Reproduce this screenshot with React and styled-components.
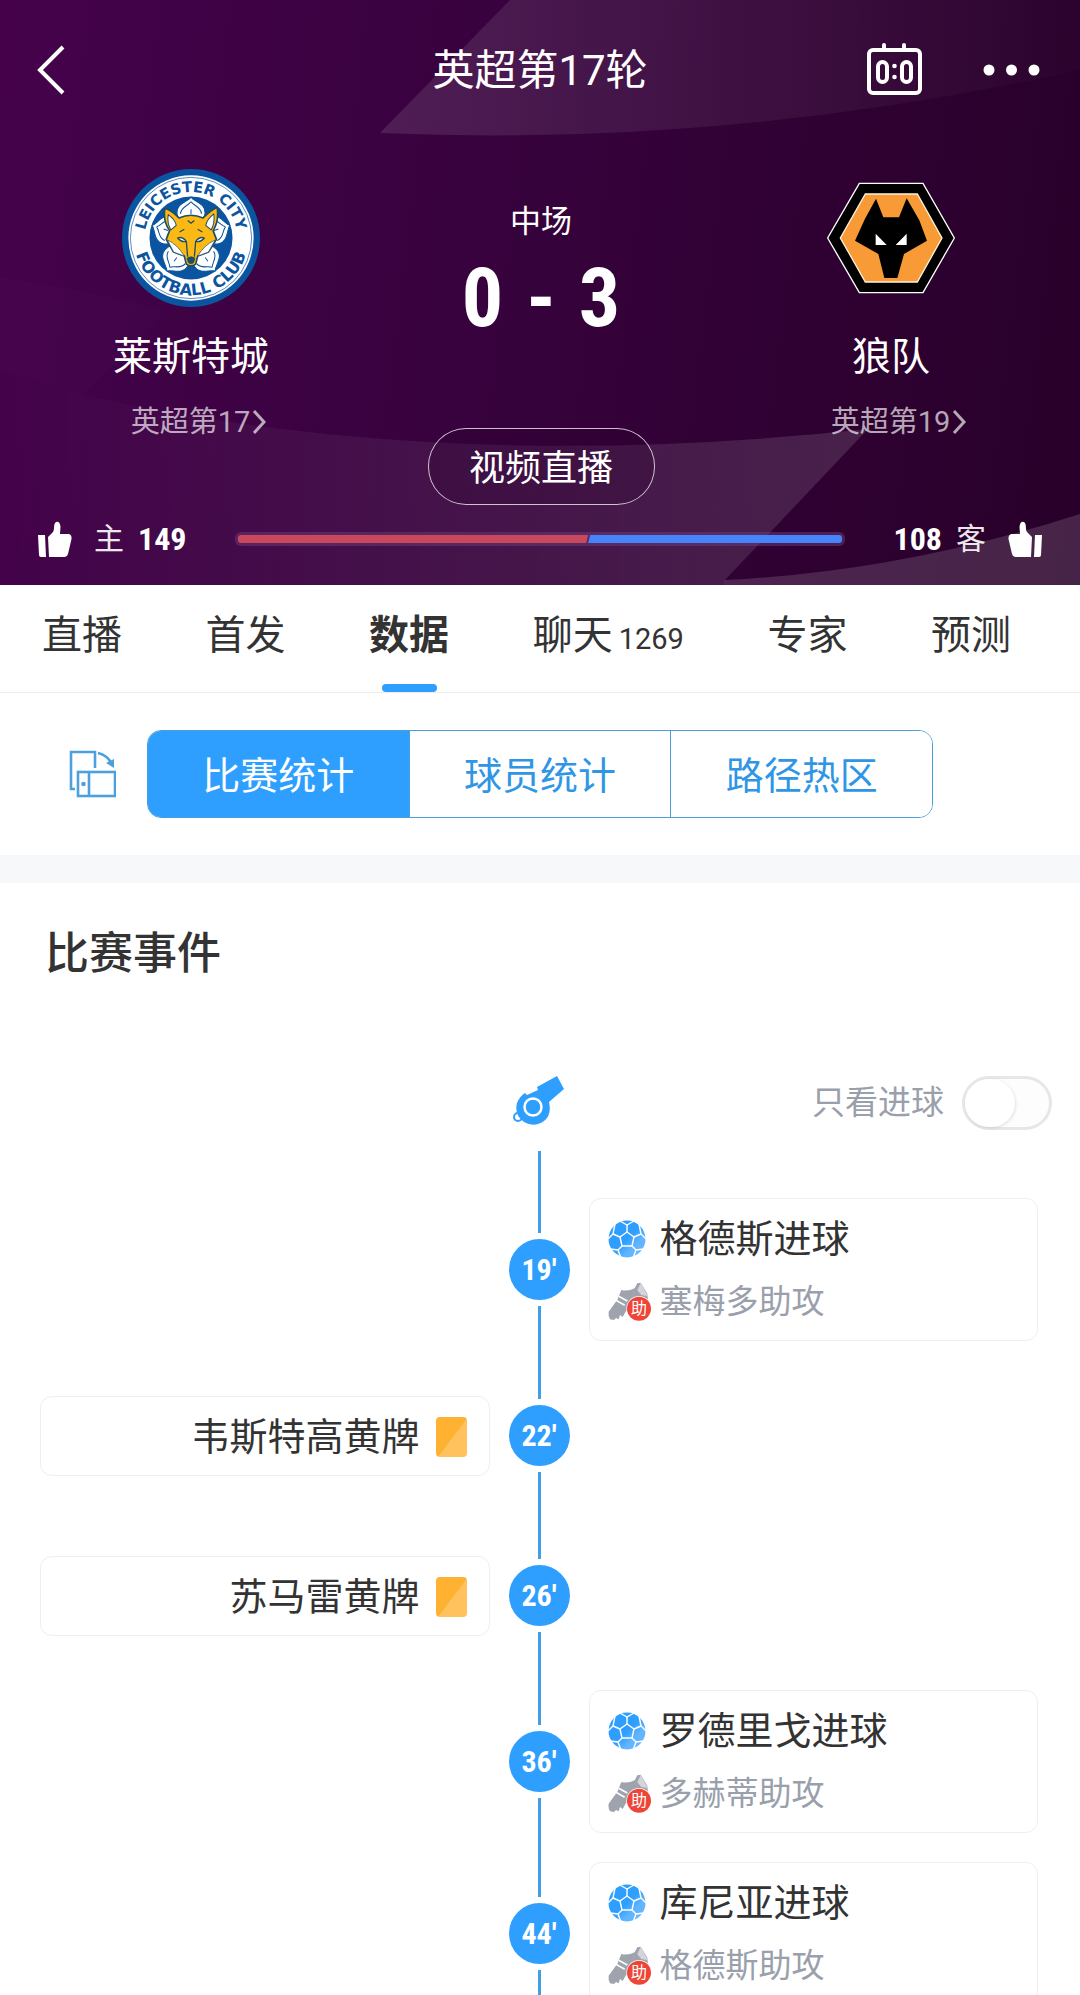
import { useState } from "react";
import styled, { createGlobalStyle } from "styled-components";

const GlobalStyle = createGlobalStyle`
  * {
    box-sizing: border-box;
  }

  body {
    margin: 0;
    background: #fff;
    color: #333;
    font-family: Roboto, "Noto Sans CJK SC", sans-serif;
  }

  button {
    border: 0;
    padding: 0;
    background: none;
    color: inherit;
    font: inherit;
    cursor: pointer;
  }

  a {
    color: inherit;
    text-decoration: none;
  }

  svg {
    display: block;
    flex: none;
  }
`;

const PageStyled = styled.div`
  display: flex;
  flex-direction: column;
  height: 100vh;
  overflow: hidden;
`;

const HeaderStyled = styled.header`
  position: relative;
  flex: none;
  background: linear-gradient(97deg, #45024b 0%, #37023d 45%, #280029 100%);
  color: #fff;
`;

const BackdropStyled = styled.svg`
  position: absolute;
  inset: 0;
  width: 100%;
  height: 100%;
`;

const TopBarStyled = styled.div`
  position: relative;
  display: grid;
  grid-template-columns: 1fr auto 1fr;
  align-items: center;
  height: 140px;
  padding: 0 37px;
`;

const TitleStyled = styled.h1`
  margin: 0;
  padding-top: 2px;
  font-size: 42px;
  font-weight: 400;
  line-height: 60px;
`;

const ActionsStyled = styled.div`
  display: flex;
  justify-content: flex-end;
  align-items: center;
  gap: 61px;
`;

const MatchStyled = styled.div`
  position: relative;
  display: grid;
  grid-template-columns: 1fr 1fr 1fr;
  padding: 29px 14px 0 16px;
`;

const TeamStyled = styled.div`
  display: flex;
  flex-direction: column;
  align-items: center;
`;

const TeamNameStyled = styled.h2`
  margin: 26px 0 21px;
  font-size: 39px;
  font-weight: 400;
  line-height: 48px;
`;

const RankStyled = styled.a`
  display: flex;
  align-items: center;
  gap: 2px;
  padding-left: 16px;
  color: rgba(255, 255, 255, 0.66);
  font-size: 29px;
  line-height: 40px;
`;

const CenterStyled = styled.div`
  display: flex;
  flex-direction: column;
  align-items: center;
  padding-top: 33px;
`;

const StatusStyled = styled.span`
  font-size: 31px;
  line-height: 40px;
`;

const ScoreStyled = styled.div`
  display: flex;
  gap: 23px;
  margin: 16px 0 90px;
  font-family: "Liberation Sans Narrow", "Roboto Condensed", Roboto, sans-serif;
  font-size: 82px;
  font-weight: 700;
  line-height: 80px;
`;

const LiveButtonStyled = styled.button`
  width: 227px;
  height: 77px;
  padding-bottom: 4px;
  border: 1px solid rgba(255, 255, 255, 0.75);
  border-radius: 38px;
  background: rgba(40, 0, 41, 0.2);
  font-size: 36px;
`;

const VotesStyled = styled.div`
  position: relative;
  display: grid;
  grid-template-columns: 197px 1fr 197px;
  align-items: center;
  height: 80px;
  padding: 0 38px 12px;
`;

const VoteStyled = styled.button`
  display: flex;
  flex-direction: ${({ $away }) => ($away ? "row-reverse" : "row")};
  align-items: center;

  svg {
    transform: ${({ $away }) => ($away ? "scaleX(-1)" : "none")};
  }
`;

const VoteSideStyled = styled.span`
  margin: ${({ $away }) => ($away ? "0 22px 0 14px" : "0 14px 0 22px")};
  font-size: 30px;
  line-height: 40px;
  opacity: 0.9;
`;

const VoteCountStyled = styled.span`
  font-family: "Liberation Sans Narrow", "Roboto Condensed", Roboto, sans-serif;
  font-size: 32px;
  font-weight: 700;
  line-height: 40px;
`;

const VoteBarStyled = styled.div`
  display: flex;
  height: 14px;
  padding: 3px;
  border-radius: 6px;
  background: rgba(110, 60, 125, 0.5);
`;

const HomeShareStyled = styled.div`
  border-radius: 3px 0 0 3px;
  background: #c9485b;
  clip-path: polygon(0 0, 100% 0, calc(100% - 2px) 100%, 0 100%);
`;

const AwayShareStyled = styled.div`
  flex: 1;
  border-radius: 0 3px 3px 0;
  background: #4684fb;
  clip-path: polygon(2px 0, 100% 0, 100% 100%, 0 100%);
`;

const TabsStyled = styled.nav`
  display: flex;
  flex: none;
  justify-content: space-between;
  height: 108px;
  padding: 0 69px 0 42px;
  border-bottom: 1px solid #ececec;
`;

const TabStyled = styled.button`
  display: flex;
  flex-direction: column;
  align-items: center;
  font-size: 40px;
  font-weight: ${({ $active }) => ($active ? 700 : 400)};
  line-height: 97px;

  &::after {
    content: "";
    width: 55px;
    height: 8px;
    border-radius: 4px;
    background: ${({ $active }) => ($active ? "#2e9fff" : "transparent")};
  }
`;

const TabLabelStyled = styled.span`
  padding-top: 2px;
`;

const TabCountStyled = styled.span`
  margin-left: 6px;
  font-size: 29px;
`;

const SwitcherStyled = styled.div`
  display: flex;
  flex: none;
  align-items: center;
  gap: 31px;
  padding: 37px 147px 37px 69px;
`;

const SegmentsStyled = styled.div`
  display: flex;
  flex: 1;
  height: 88px;
  overflow: hidden;
  border: 1px solid #4a9fd8;
  border-radius: 14px;
`;

const SegmentStyled = styled.button`
  flex: 1;
  padding-bottom: 4px;
  background: ${({ $active }) => ($active ? "#2e9fff" : "#fff")};
  color: ${({ $active }) => ($active ? "#fff" : "#2f96e6")};
  font-size: 38px;

  & + & {
    border-left: 1px solid #4a9fd8;
  }
`;

const DividerStyled = styled.div`
  flex: none;
  height: 28px;
  background: #f7f8fa;
`;

const SectionTitleStyled = styled.h2`
  flex: none;
  margin: 41px 45px 91px;
  font-size: 44px;
  font-weight: 500;
  line-height: 60px;
`;

const TimelineStyled = styled.ol`
  flex: none;
  margin: 0;
  padding: 0;
  list-style: none;
`;

const KickoffStyled = styled.div`
  display: grid;
  flex: none;
  grid-template-columns: 1fr 61px 1fr;
  align-items: start;
  height: 108px;
  padding: 0 28px 0 26px;
`;

const KickoffMarkStyled = styled.div`
  display: flex;
  flex-direction: column;
  align-items: center;
  gap: 25px;
  height: 100%;
`;

const GoalFilterStyled = styled.label`
  display: flex;
  justify-content: flex-end;
  align-items: center;
  gap: 18px;
  color: #9a9fac;
  font-size: 33px;
  line-height: 55px;
`;

const ToggleStyled = styled.input`
  appearance: none;
  width: 90px;
  height: 54px;
  margin: 0;
  border: 3px solid #e8e6e8;
  border-radius: 27px;
  background: ${({ checked }) => (checked ? "#2e9fff" : "#fdfdfd")};

  &::before {
    content: "";
    display: block;
    width: 50px;
    height: 48px;
    margin-left: ${({ checked }) => (checked ? "34px" : "0")};
    border-radius: 25px;
    background: #fff;
    box-shadow: 1px 1px 3px rgba(60, 40, 60, 0.13);
  }
`;

const EventStyled = styled.li`
  display: grid;
  grid-template-columns: 1fr 61px 1fr;
  gap: 19px;
  min-height: 160px;
  padding: 0 42px 0 40px;
`;

const TrackStyled = styled.div`
  display: flex;
  grid-column: 2;
  grid-row: 1;
  flex-direction: column;
  align-items: center;
  gap: 6px;
`;

const LineStyled = styled.div`
  flex: 1;
  width: 3px;
  background: #409fe6;
`;

const MinuteStyled = styled.time`
  width: 61px;
  height: 61px;
  border-radius: 50%;
  background: #2e9fff;
  color: #fff;
  font-family: "Liberation Sans Narrow", "Roboto Condensed", Roboto, sans-serif;
  font-size: 30px;
  font-weight: 700;
  line-height: 61px;
  text-align: center;
`;

const CardStyled = styled.div`
  grid-column: ${({ $home }) => ($home ? 1 : 3)};
  grid-row: 1;
  align-self: center;
  margin: 15px 0 14px;
  padding: ${({ $home }) => ($home ? "16px 22px 14px" : "16px 18px 14px")};
  border: 1px solid #eee;
  border-radius: 12px;
`;

const CardRowStyled = styled.div`
  display: flex;
  flex-direction: ${({ $home }) => ($home ? "row-reverse" : "row")};
  align-items: center;
  gap: ${({ $home }) => ($home ? "16px" : "8px")};
  font-size: 38px;
  line-height: 48px;
`;

const AssistStyled = styled(CardRowStyled)`
  margin-top: 15px;
  color: #9a9fac;
  font-size: 33px;
`;

const IconSlotStyled = styled.span`
  display: flex;
  width: 44px;
`;

const PenaltyCardStyled = styled.span`
  width: 31px;
  height: 40px;
  border-radius: 4px;
  background: linear-gradient(127deg, #ffb132 52%, #ffc25c 53%);
`;

const tabs = ["直播", "首发", "数据", "聊天", "专家", "预测"];
const segments = ["比赛统计", "球员统计", "路径热区"];
const events = [
  { minute: 19, type: "goal", text: "格德斯进球", assist: "塞梅多助攻" },
  { minute: 22, type: "card", home: true, text: "韦斯特高黄牌" },
  { minute: 26, type: "card", home: true, text: "苏马雷黄牌" },
  { minute: 36, type: "goal", text: "罗德里戈进球", assist: "多赫蒂助攻" },
  { minute: 44, type: "goal", text: "库尼亚进球", assist: "格德斯助攻" },
];

function Backdrop() {
  return (
    <BackdropStyled viewBox="0 0 1080 585" preserveAspectRatio="none" aria-hidden="true">
      <defs>
        <linearGradient id="sweepTop" x1="0" x2="1">
          <stop offset="0" stopColor="#fff" stopOpacity="0.11" />
          <stop offset="1" stopColor="#fff" stopOpacity="0.01" />
        </linearGradient>
        <linearGradient id="sweepBottom" x1="0" x2="1">
          <stop offset="0" stopColor="#fff" stopOpacity="0" />
          <stop offset="1" stopColor="#fff" stopOpacity="0.13" />
        </linearGradient>
      </defs>
      <path d="M510 0L380 133Q730 148 1080 70V0z" fill="url(#sweepTop)" />
      <path d="M0 277Q90 290 165 311L83 395L0 370z" fill="#fff" fillOpacity="0.01" />
      <path d="M83 395Q440 475 868 429L724 581V585H0V370z" fill="url(#sweepBottom)" />
      <path d="M724 580Q900 572 1080 514V585H724z" fill="#fff" fillOpacity="0.14" />
    </BackdropStyled>
  );
}

function LeicesterCrest() {
  return (
    <svg width="138" height="138" viewBox="-206 -206 412 412" role="img" aria-label="莱斯特城">
      <defs>
        <path id="arcTop" d="M-136 30A139 139 0 1 1 136 30" />
        <path id="arcBottom" d="M-169 -26A171 171 0 1 0 169 -26" />
      </defs>
      <circle r="206" fill="#0a54a0" />
      <circle r="187" fill="#fff" />
      <circle r="181" fill="none" stroke="#0a54a0" strokeWidth="2" />
      <circle r="124" fill="#0a54a0" />
      <g fill="#fff" stroke="#0a54a0" strokeWidth="3">
        {[0, 72, 144, 216, 288].map((angle) => (
          <g key={angle} transform={`rotate(${angle})`}>
            <path d="M0 -122C10 -108 44 -104 42 -74C40 -50 20 -38 0 -20C-20 -38 -40 -50 -42 -74C-44 -104 -10 -108 0 -122z" />
            <path d="M0 -108C8 -96 32 -92 31 -72M0 -108C-8 -96 -32 -92 -31 -72M0 -86V-72" fill="none" />
          </g>
        ))}
      </g>
      <g stroke="#1f4e63" strokeWidth="5" strokeLinejoin="round">
        <path d="M-78 -88C-60 -84 -48 -72 -36 -60Q0 -76 36 -60C48 -72 60 -84 78 -92Q84 -50 66 -22L76 4L52 42L20 54L14 78Q0 88 -14 78L-20 54L-52 42L-74 4L-64 -22Q-84 -50 -78 -88z" fill="#fdb913" />
        <path d="M-68 -70Q-48 -56 -44 -38L-60 -24Q-72 -44 -68 -70zM68 -72Q48 -56 44 -38L60 -24Q72 -44 68 -72z" fill="#fff" strokeWidth="3" />
        <path d="M-70 6Q-40 20 -20 54L-52 42zM72 6Q40 20 20 54L52 42z" fill="#fff" strokeWidth="2" />
        <path d="M-12 60Q0 52 12 60L8 74Q0 80 -8 74z" fill="#1f4e63" strokeWidth="2" />
        <path d="M-40 0Q-26 -6 -14 10Q-28 14 -40 0zM40 0Q26 -6 14 10Q28 14 40 0z" fill="#fff" strokeWidth="4" />
        <path d="M-14 10L-10 56M14 10L10 56M-10 -52L0 -44L10 -52M-34 -18L-20 -26M34 -18L20 -26" fill="none" strokeWidth="4" />
      </g>
      <g fill="#0a54a0" fontFamily="'DejaVu Sans', sans-serif" fontWeight="700" textAnchor="middle">
        <text fontSize="44">
          <textPath href="#arcTop" startOffset="50%">LEICESTER CITY</textPath>
        </text>
        <text fontSize="48">
          <textPath href="#arcBottom" startOffset="50%">FOOTBALL CLUB</textPath>
        </text>
      </g>
    </svg>
  );
}

function WolvesCrest() {
  return (
    <svg width="138" height="138" viewBox="33 26 414 414" role="img" aria-label="狼队">
      <path d="M145 69H336L430 233L336 397H145L50 233z" fill="#000" stroke="#fff" strokeWidth="4" />
      <path d="M163 101H319L393 233L319 365H163L88 233z" fill="#f89a35" stroke="#fff3dc" strokeWidth="4" />
      <path d="M195 115L217 171H264L287 114L325 180L348 241L279 281L259 353H220L202 281L132 241L162 175z" fill="#000" />
      <path d="M194 220L227 254H194zM287 220V254H254z" fill="#fff" />
    </svg>
  );
}

function ScoreboardIcon() {
  return (
    <svg width="55" height="56" viewBox="0 0 55 56" fill="none" stroke="#fff" strokeLinecap="round">
      <rect x="2" y="8" width="51" height="43" rx="4" strokeWidth="4" />
      <path d="M17 3V7M37 3V7" strokeWidth="4" />
      <rect x="11" y="20" width="9" height="20" rx="4.500" strokeWidth="4" />
      <rect x="35" y="20" width="9" height="20" rx="4.500" strokeWidth="4" />
      <circle cx="27.500" cy="24" r="2.300" fill="#fff" stroke="none" />
      <circle cx="27.500" cy="35" r="2.300" fill="#fff" stroke="none" />
    </svg>
  );
}

function ThumbIcon() {
  return (
    <svg width="34" height="37" viewBox="0 0 34 37" fill="#fff">
      <path d="M0 14H7L8 36H3Q1 36 1 34z" />
      <path d="M10 16L15 11C17 8 15 3 18 1Q22 0 22.500 6L22 13H31Q34 14 33.500 18L30 33Q29 36 26 36H11z" />
    </svg>
  );
}

function ChevronIcon() {
  return (
    <svg width="15" height="26" viewBox="0 0 15 26" fill="none" stroke="currentColor" strokeWidth="3">
      <path d="M2 2L12 13L2 24" />
    </svg>
  );
}

function RotateIcon() {
  return (
    <svg width="47" height="48" viewBox="0 0 47 48" fill="none" stroke="#4da0de" strokeWidth="2.600">
      <path d="M6 39H2V2H26V18" />
      <rect x="9" y="22" width="37" height="24" />
      <path d="M20 22V46M29 3Q38 5 43 14" />
      <path d="M37 13L45 18L45 9z" fill="#4da0de" stroke="none" />
      <circle cx="14.500" cy="34" r="2.300" fill="#4da0de" stroke="none" />
    </svg>
  );
}

function WhistleIcon() {
  return (
    <svg width="53" height="51" viewBox="0 0 53 51" fill="#2e9fff">
      <circle cx="5" cy="42" r="4" fill="none" stroke="#2e9fff" strokeWidth="2" />
      <path d="M12 18L14 20L25 15L24 12L44 1L51 14L36 27Q39 40 31 46Q21 53 11 47Q1 40 4 28Q7 21 12 18z" />
      <circle cx="20" cy="32" r="8.500" fill="none" stroke="#fff" strokeWidth="2.500" />
    </svg>
  );
}

function BallIcon() {
  return (
    <svg width="38" height="38" viewBox="-19 -19 38 38">
      <defs>
        <linearGradient id="ballFill" x1="0" y1="0" x2="1" y2="1">
          <stop offset="0.5" stopColor="#2e9fff" />
          <stop offset="0.7" stopColor="#62b5ff" />
        </linearGradient>
      </defs>
      <circle r="18.500" fill="url(#ballFill)" />
      <g fill="none" stroke="#fff" strokeWidth="1.400">
        <path d="M0 -7L7 -2L5 7H-5L-7 -2z" />
        <path d="M0 -7V-14M7 -2L14 -5M5 7L9 11M-5 7L-9 11M-7 -2L-14 -5" />
        <path d="M-7 -18L0 -14L7 -18M12 -15L14 -5L19 0M17 10L9 11L6 19M-6 19L-9 11L-17 10M-19 0L-14 -5L-12 -15" />
      </g>
    </svg>
  );
}

function AssistIcon() {
  return (
    <svg width="44" height="40" viewBox="18 219 132 120">
      <path d="M58 243Q78 248 98 238L106 223L116 221L136 254L138 275L90 300L72 306L62 324L54 318L50 331L42 327L36 333L24 331Q18 322 20 308L46 272z" fill="#9fa3ae" />
      <path d="M116 221L138 262L118 258L106 244z" fill="#d3d5da" />
      <path d="M50 262L76 276M42 274L68 289" stroke="#fff" strokeWidth="5" />
      <circle cx="111" cy="299" r="38" fill="#fff" />
      <circle cx="111" cy="299" r="36" fill="#ee4536" />
      <text x="111" y="316" fill="#fff" fontSize="48" textAnchor="middle">
        助
      </text>
    </svg>
  );
}

function Team({ crest, name, rank }) {
  return (
    <TeamStyled>
      {crest}
      <TeamNameStyled>{name}</TeamNameStyled>
      <RankStyled href="#rank">
        {rank}
        <ChevronIcon />
      </RankStyled>
    </TeamStyled>
  );
}

function Vote({ side, count, away }) {
  return (
    <VoteStyled $away={away}>
      <ThumbIcon />
      <VoteSideStyled $away={away}>{side}</VoteSideStyled>
      <VoteCountStyled>{count}</VoteCountStyled>
    </VoteStyled>
  );
}

function MatchEvent({ minute, type, home, text, assist }) {
  return (
    <EventStyled>
      <TrackStyled>
        <LineStyled />
        <MinuteStyled>{minute}′</MinuteStyled>
        <LineStyled />
      </TrackStyled>
      <CardStyled $home={home}>
        <CardRowStyled $home={home}>
          {type === "goal" ? (
            <IconSlotStyled>
              <BallIcon />
            </IconSlotStyled>
          ) : (
            <PenaltyCardStyled />
          )}
          {text}
        </CardRowStyled>
        {assist && (
          <AssistStyled>
            <AssistIcon />
            {assist}
          </AssistStyled>
        )}
      </CardStyled>
    </EventStyled>
  );
}

function App() {
  const [tab, setTab] = useState("数据");
  const [segment, setSegment] = useState("比赛统计");
  const [goalsOnly, setGoalsOnly] = useState(false);
  const home = 149;
  const away = 108;

  return (
    <PageStyled>
      <GlobalStyle />
      <HeaderStyled>
        <Backdrop />
        <TopBarStyled>
          <button aria-label="返回">
            <svg width="28" height="50" viewBox="0 0 28 50" fill="none" stroke="#fff" strokeWidth="4">
              <path d="M26 2L3 25L26 48" />
            </svg>
          </button>
          <TitleStyled>英超第17轮</TitleStyled>
          <ActionsStyled>
            <button aria-label="比分">
              <ScoreboardIcon />
            </button>
            <button aria-label="更多">
              <svg width="60" height="12" viewBox="0 0 60 12" fill="#fff">
                <circle cx="6" cy="6" r="5.500" />
                <circle cx="28.500" cy="6" r="5.500" />
                <circle cx="51" cy="6" r="5.500" />
              </svg>
            </button>
          </ActionsStyled>
        </TopBarStyled>
        <MatchStyled>
          <Team crest={<LeicesterCrest />} name="莱斯特城" rank="英超第17" />
          <CenterStyled>
            <StatusStyled>中场</StatusStyled>
            <ScoreStyled>
              <span>0</span>
              <span>-</span>
              <span>3</span>
            </ScoreStyled>
            <LiveButtonStyled>视频直播</LiveButtonStyled>
          </CenterStyled>
          <Team crest={<WolvesCrest />} name="狼队" rank="英超第19" />
        </MatchStyled>
        <VotesStyled>
          <Vote side="主" count={home} />
          <VoteBarStyled>
            <HomeShareStyled style={{ width: `${(home / (home + away)) * 100}%` }} />
            <AwayShareStyled />
          </VoteBarStyled>
          <Vote side="客" count={away} away />
        </VotesStyled>
      </HeaderStyled>

      <TabsStyled>
        {tabs.map((name) => (
          <TabStyled key={name} $active={name === tab} onClick={() => setTab(name)}>
            <TabLabelStyled>
              {name}
              {name === "聊天" && <TabCountStyled>1269</TabCountStyled>}
            </TabLabelStyled>
          </TabStyled>
        ))}
      </TabsStyled>

      <SwitcherStyled>
        <button aria-label="横屏">
          <RotateIcon />
        </button>
        <SegmentsStyled>
          {segments.map((name) => (
            <SegmentStyled key={name} $active={name === segment} onClick={() => setSegment(name)}>
              {name}
            </SegmentStyled>
          ))}
        </SegmentsStyled>
      </SwitcherStyled>
      <DividerStyled />

      <SectionTitleStyled>比赛事件</SectionTitleStyled>
      <KickoffStyled>
        <span />
        <KickoffMarkStyled>
          <WhistleIcon />
          <LineStyled />
        </KickoffMarkStyled>
        <GoalFilterStyled>
          只看进球
          <ToggleStyled
            type="checkbox"
            checked={goalsOnly}
            onChange={(e) => setGoalsOnly(e.target.checked)}
          />
        </GoalFilterStyled>
      </KickoffStyled>
      <TimelineStyled>
        {events
          .filter((event) => !goalsOnly || event.type === "goal")
          .map((event) => (
            <MatchEvent key={event.minute} {...event} />
          ))}
      </TimelineStyled>
    </PageStyled>
  );
}

export default App;
